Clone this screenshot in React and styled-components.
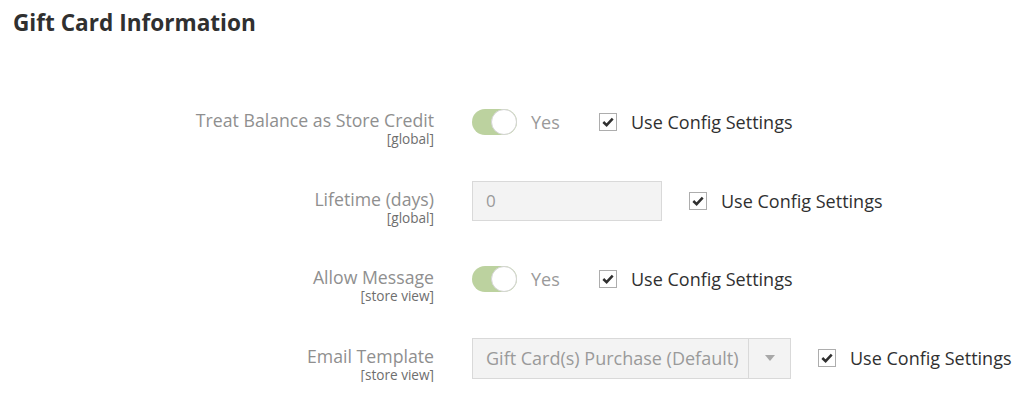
import React from "react";
import styled, { createGlobalStyle } from "styled-components";

const Global = createGlobalStyle`
  html, body { margin: 0; padding: 0; background: #fff; }
  body { font-family: "Open Sans", "Noto Sans", sans-serif; color: #303030; }
`;

const Page = styled.div`
  padding: 8px 0 0 0;
`;

const Title = styled.h2`
  margin: 0 0 0 13px;
  font-size: 22.6px;
  font-weight: 700;
  line-height: 30px;
  color: #303030;
`;

const Form = styled.div`
  display: flex;
  flex-direction: column;
  gap: 34.7px;
  margin-top: 64px;
`;

const Row = styled.div`
  display: grid;
  grid-template-columns: 434px auto;
  column-gap: 38px;
  align-items: start;
`;

const LabelCol = styled.div`
  text-align: right;
  padding-top: 8px;
`;

const LabelText = styled.div`
  font-size: 17.7px;
  line-height: 21px;
  color: #8f8f8f;
`;

const Scope = styled.div`
  font-size: 13.6px;
  line-height: 15px;
  color: #6e6e6e;
`;

const Control = styled.div`
  display: flex;
  align-items: center;
  height: 40px;
`;

const Switch = styled.span`
  position: relative;
  display: inline-block;
  width: 45px;
  height: 26px;
  border-radius: 13px;
  background: #bcd29f;
  flex: none;
  &::after {
    content: "";
    position: absolute;
    right: 0;
    top: 0;
    width: 24px;
    height: 24px;
    border-radius: 50%;
    background: #fff;
    border: 1px solid #d4d4d4;
  }
`;

const SwitchLabel = styled.span`
  font-size: 18px;
  color: #9a9a9a;
  margin-left: 14px;
  width: 68px;
`;

const TextInput = styled.div`
  box-sizing: border-box;
  width: 190px;
  height: 40px;
  background: #f3f3f3;
  border: 1px solid #d9d9d9;
  display: flex;
  align-items: center;
  padding-left: 13px;
  font-size: 17px;
  color: #9a9a9a;
  margin-right: 27px;
`;

const Select = styled.div`
  box-sizing: border-box;
  width: 319px;
  height: 41px;
  background: #f3f3f3;
  border: 1px solid #d9d9d9;
  display: flex;
  align-items: stretch;
  margin-right: 27px;
`;

const SelectValue = styled.span`
  flex: 1;
  display: flex;
  align-items: center;
  padding-left: 13px;
  font-size: 18px;
  color: #9a9a9a;
  white-space: nowrap;
`;

const SelectArrow = styled.span`
  width: 41px;
  border-left: 1px solid #d9d9d9;
  display: flex;
  align-items: center;
  justify-content: center;
  &::before {
    content: "";
    border-left: 5px solid transparent;
    border-right: 5px solid transparent;
    border-top: 6px solid #a8a8a8;
  }
`;

const CheckWrap = styled.label`
  display: flex;
  align-items: center;
  gap: 14px;
  font-size: 18px;
  color: #303030;
  white-space: nowrap;
`;

const Box = styled.span`
  box-sizing: border-box;
  width: 18px;
  height: 18px;
  border: 1px solid #adadad;
  background: #fff;
  display: flex;
  align-items: center;
  justify-content: center;
`;

const Check = () => (
  <Box>
    <svg width="12" height="10" viewBox="0 0 12 10">
      <path d="M1.3 5 L4.6 8.2 L10.7 1.6" fill="none" stroke="#303030" strokeWidth="2.5" />
    </svg>
  </Box>
);

const UseConfig = () => (
  <CheckWrap>
    <Check />
    Use Config Settings
  </CheckWrap>
);

const Label = ({ text, scope }) => (
  <LabelCol>
    <LabelText>{text}</LabelText>
    <Scope>{scope}</Scope>
  </LabelCol>
);

export default function App() {
  return (
    <Page>
      <Global />
      <Title>Gift Card Information</Title>
      <Form>
        <Row>
          <Label text="Treat Balance as Store Credit" scope="[global]" />
          <Control>
            <Switch />
            <SwitchLabel>Yes</SwitchLabel>
            <UseConfig />
          </Control>
        </Row>
        <Row>
          <Label text="Lifetime (days)" scope="[global]" />
          <Control>
            <TextInput>0</TextInput>
            <UseConfig />
          </Control>
        </Row>
        <Row>
          <Label text="Allow Message" scope="[store view]" />
          <Control>
            <Switch />
            <SwitchLabel>Yes</SwitchLabel>
            <UseConfig />
          </Control>
        </Row>
        <Row>
          <Label text="Email Template" scope="[store view]" />
          <Control>
            <Select>
              <SelectValue>Gift Card(s) Purchase (Default)</SelectValue>
              <SelectArrow />
            </Select>
            <UseConfig />
          </Control>
        </Row>
      </Form>
    </Page>
  );
}
